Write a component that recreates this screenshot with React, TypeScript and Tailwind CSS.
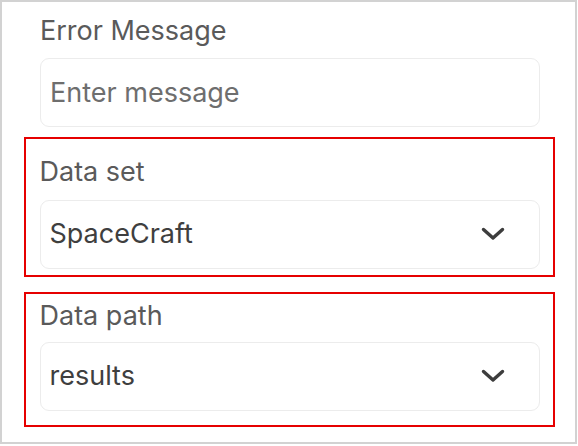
import React from 'react'

function Chevron() {
  return (
    <svg width="24" height="14" viewBox="0 0 24 14" fill="none">
      <polyline
        points="2.5,2.5 12,11 21.5,2.5"
        stroke="#3d3d3d"
        strokeWidth="3.4"
        strokeLinecap="round"
        strokeLinejoin="round"
      />
    </svg>
  )
}

function SelectBox({ value }: { value: string }) {
  return (
    <div className="flex h-[69px] w-[500px] items-center justify-between rounded-[9px] border border-[#ececec] bg-white pl-[9px] pr-[34px]">
      <span className="text-[27px] leading-[32px] text-[#3f3f3f]">{value}</span>
      <Chevron />
    </div>
  )
}

export default function App() {
  return (
    <div
      className="h-[446px] w-[578px] bg-white"
      style={{ fontFamily: 'Inter, "Noto Sans", sans-serif' }}
    >
      <div className="flex h-[444px] w-[577px] flex-col border-2 border-[#d2d2d2] pl-[22px] pr-[20px] pt-[13px]">
        {/* Error message field */}
        <div className="flex flex-col px-[16px]">
          <label className="text-[27px] leading-[32px] text-[#5a5a5a]">Error Message</label>
          <div className="mt-[11px] flex h-[69px] w-[500px] items-center rounded-[9px] border border-[#ececec] bg-white pl-[9px]">
            <span className="text-[27px] leading-[32px] text-[#6e6e6e]">Enter message</span>
          </div>
        </div>

        {/* Data set */}
        <div className="mt-[10px] flex h-[140px] flex-col border-[2.5px] border-[#e60000] px-[13.5px] pt-[16.5px]">
          <label className="text-[27px] leading-[32px] text-[#5a5a5a]">Data set</label>
          <div className="mt-[12px]">
            <SelectBox value="SpaceCraft" />
          </div>
        </div>

        {/* Data path */}
        <div className="mt-[15px] flex h-[135px] flex-col border-[2.5px] border-[#e60000] px-[13.5px] pt-[5.5px]">
          <label className="text-[27px] leading-[32px] text-[#5a5a5a]">Data path</label>
          <div className="mt-[10px]">
            <SelectBox value="results" />
          </div>
        </div>
      </div>
    </div>
  )
}
